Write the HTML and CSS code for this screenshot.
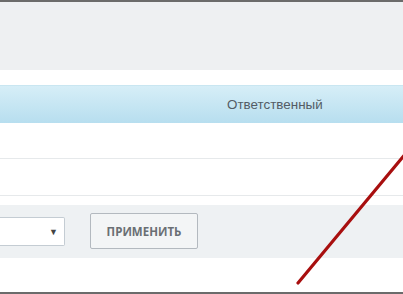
FILE: index.html
```html
<!DOCTYPE html>
<html lang="ru">
<head>
<meta charset="utf-8">
<link rel="stylesheet" href="styles.css">
</head>
<body>
<div class="frame">
  <div class="top-panel"></div>
  <div class="spacer-15"></div>
  <div class="grid-head">
    <div class="head-cell">Ответственный</div>
  </div>
  <div class="grid-row"></div>
  <div class="grid-row grid-row--second"></div>
  <div class="spacer-9"></div>
  <div class="filter-panel">
    <div class="select-box"><span class="select-arrow">▼</span></div>
    <button class="apply-btn">ПРИМЕНИТЬ</button>
  </div>
  <div class="bottom-space"></div>
  <svg class="marker" width="403" height="294" viewBox="0 0 403 294">
    <line x1="298" y1="281" x2="412" y2="144" stroke="#a80f0f" stroke-width="3.2" stroke-linecap="round"/>
  </svg>
</div>
</body>
</html>
```

FILE: styles.css
```css
html, body {
  margin: 0;
  padding: 0;
  background: #ffffff;
}
.frame {
  position: relative;
  width: 403px;
  height: 294px;
  overflow: hidden;
  border-top: 2px solid #6b6b6b;
  border-bottom: 2px solid #6b6b6b;
  box-sizing: border-box;
  display: flex;
  flex-direction: column;
  font-family: "Liberation Sans", Arial, sans-serif;
}
.top-panel {
  height: 68px;
  background: #eef0f2;
  flex: none;
}
.spacer-15 {
  height: 15px;
  flex: none;
}
.grid-head {
  height: 38px;
  flex: none;
  box-sizing: border-box;
  border-top: 1px solid #c9e6f1;
  background: linear-gradient(#d6eef7, #b7deef);
  display: flex;
  align-items: center;
  padding-left: 227px;
}
.head-cell {
  font-size: 13.4px;
  color: #535c65;
}
.grid-row {
  height: 36px;
  flex: none;
  box-sizing: border-box;
  border-bottom: 1px solid #e6e9eb;
}
.grid-row--second {
  height: 37px;
}
.spacer-9 {
  height: 9px;
  flex: none;
}
.filter-panel {
  height: 53px;
  flex: none;
  background: #eef1f3;
  display: flex;
  align-items: center;
  gap: 25px;
}
.select-box {
  width: 65px;
  height: 29px;
  box-sizing: border-box;
  background: #ffffff;
  border: 1px solid #c4ccd3;
  border-left: none;
  border-radius: 0 2px 2px 0;
  display: flex;
  align-items: center;
  justify-content: flex-end;
  padding-right: 6px;
}
.select-arrow {
  font-size: 9px;
  color: #444;
}
.apply-btn {
  width: 108px;
  height: 36px;
  box-sizing: border-box;
  border: 1px solid #b3b9bf;
  border-radius: 2px;
  background: #f3f5f6;
  font-family: "Open Sans", sans-serif;
  font-weight: 700;
  font-size: 11.5px;
  color: #6a6f74;
  padding: 0;
  margin-top: -1px;
}
.bottom-space {
  flex: 1;
}
.marker {
  position: absolute;
  left: 0;
  top: 0;
}
```
